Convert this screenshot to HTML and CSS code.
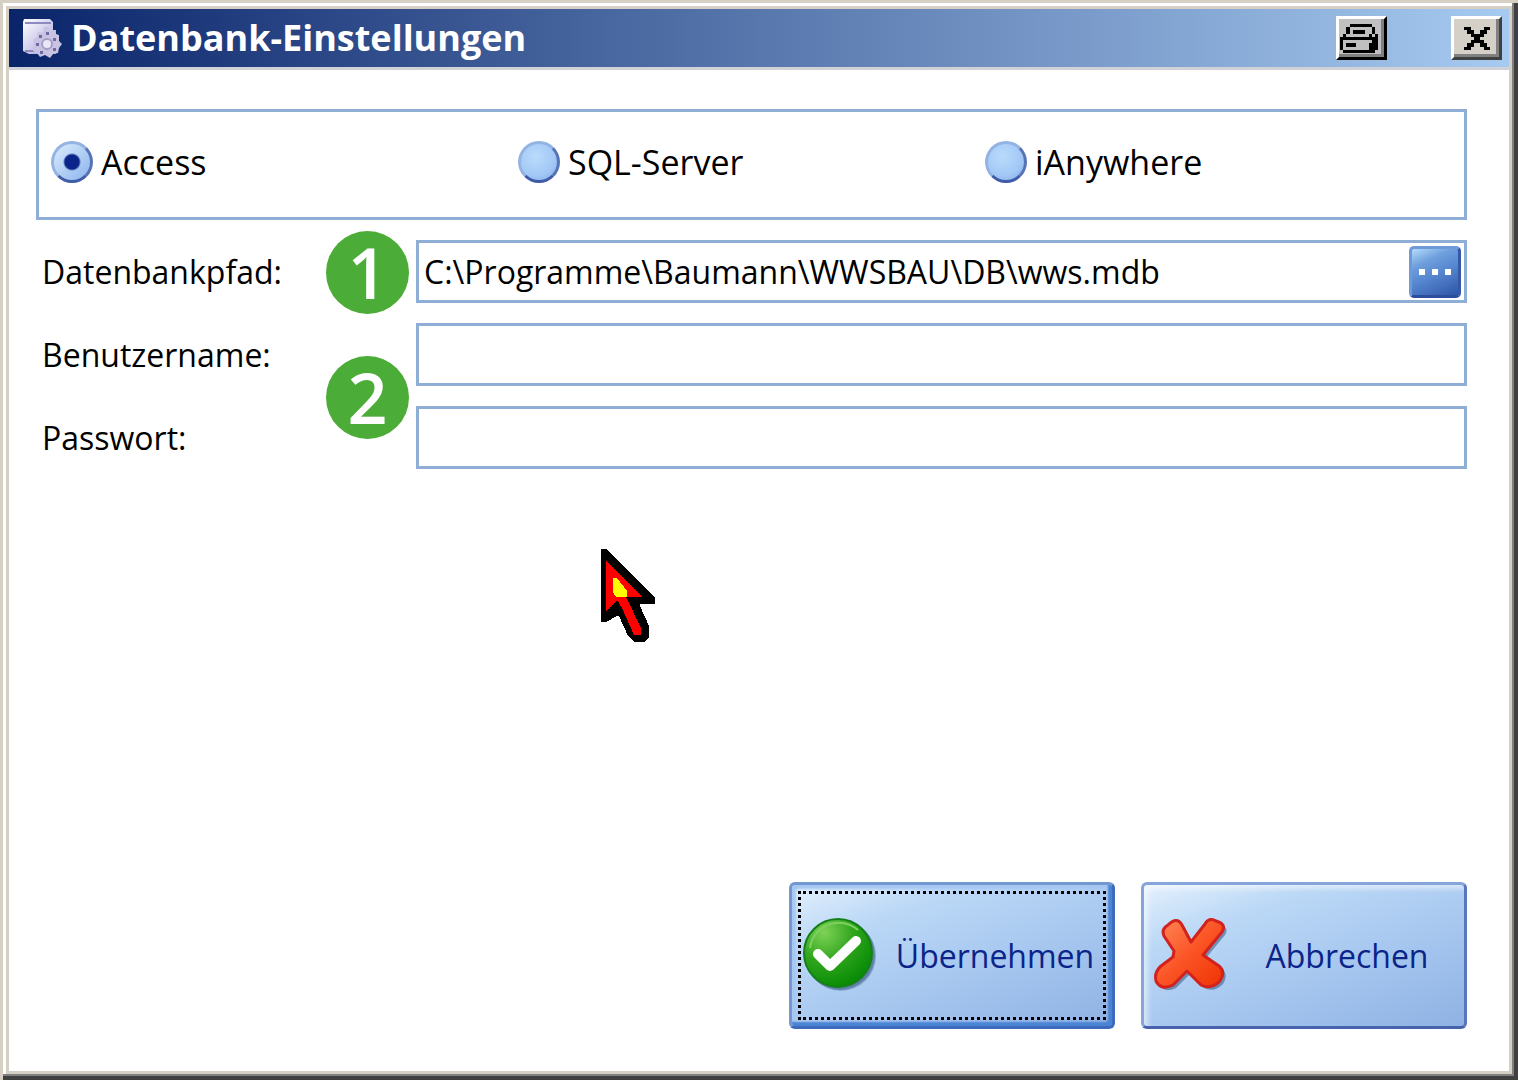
FILE: index.html
```html
<!DOCTYPE html>
<html lang="de">
<head>
    <meta charset="UTF-8">
    <meta name="viewport" content="width=device-width, initial-scale=1.0">
    <title>Datenbank-Einstellungen</title>
    <link rel="stylesheet" href="styles.css">
</head>
<body>
    <div class="window">
        <header class="titlebar">
            <svg class="app-icon" viewBox="0 0 40 41" aria-hidden="true">
                <defs>
                    <linearGradient id="sheet" x1="0" y1="0" x2="1" y2="1">
                        <stop offset="0" stop-color="#ffffff"/>
                        <stop offset="0.5" stop-color="#d2cfee"/>
                        <stop offset="1" stop-color="#9a94c8"/>
                    </linearGradient>
                </defs>
                <path d="M2 1h26l3 3v8h3v24H7l-6-3V4z" fill="url(#sheet)"/>
                <path d="M3 5h26M3 33h10" stroke="#8d8abf" stroke-width="2"/>
                <path d="M22 9h5v4l5-1 2 4 3 1v6l3 3-3 4-1 5-5 1-3 4-5-3-5 2-3-4-4-2 1-6-1-5 4-3 1-5 5 1z" fill="#c9c3e2"/>
                <path d="M17 17h3v3h-3zM24 14h3v3h-3zM31 20h3v3h-3zM14 25h3v3h-3zM18 33h3v3h-3zM31 30h3v3h-3z" fill="#6f6aa6"/>
                <circle cx="25" cy="26" r="5" fill="#e9e6f6" stroke="#a59dc8" stroke-width="2"/>
            </svg>
            <h1 class="title">Datenbank-Einstellungen</h1>
            <button type="button" class="caption-button print-button" aria-label="Drucken">
                <svg width="38" height="29" viewBox="0 0 12 9" preserveAspectRatio="none" shape-rendering="crispEdges">
                    <path d="M3 0h7v1h-7zM2 1h1v2h-1zM10 1h1v2h-1zM4 2h4v1h-4zM1 3h1v1h-1zM9 3h1v1h-1zM11 3h1v5h-1zM0 4h11v1h-11zM0 5h1v3h-1zM10 5h1v4h-1zM9 6h1v2h-1zM2 6h3v1h-3zM1 8h9v1h-9z"/>
                </svg>
            </button>
            <button type="button" class="caption-button close-button" aria-label="Schließen">
                <svg width="26" height="23" viewBox="0 0 8 7" preserveAspectRatio="none" shape-rendering="crispEdges">
                    <path d="M0 0h2v1h1v1h2v-1h1v-1h2v1h-1v1h-1v1h-1v1h1v1h1v1h1v1h-2v-1h-1v-1h-2v1h-1v1h-2v-1h1v-1h1v-1h1v-1h-1v-1h-1v-1h-1z"/>
                </svg>
            </button>
        </header>

        <form class="content">
            <!-- Datenbanktyp -->
            <div class="db-types" role="radiogroup" aria-label="Datenbanktyp">
                <label class="db-type"><input type="radio" name="dbtype" checked>Access</label>
                <label class="db-type"><input type="radio" name="dbtype">SQL-Server</label>
                <label class="db-type"><input type="radio" name="dbtype">iAnywhere</label>
            </div>

            <!-- Verbindungsdaten -->
            <div class="fields">
                <label for="dbpath">Datenbankpfad:</label>
                <div class="field">
                    <input type="text" id="dbpath" value="C:\Programme\Baumann\WWSBAU\DB\wws.mdb">
                    <button type="button" class="browse-button" aria-label="Durchsuchen">
                        <span class="dot"></span><span class="dot"></span><span class="dot"></span>
                    </button>
                </div>
                <label for="username">Benutzername:</label>
                <div class="field"><input type="text" id="username"></div>
                <label for="password">Passwort:</label>
                <div class="field"><input type="password" id="password"></div>
                <span class="badge badge-path">1</span>
                <span class="badge badge-login">2</span>
            </div>

            <div class="actions">
                <button type="submit" class="action default">
                    <svg width="76" height="76" viewBox="0 0 76 76" aria-hidden="true">
                        <defs>
                            <radialGradient id="green" cx="0.3" cy="0.2" r="0.85">
                                <stop offset="0" stop-color="#7fd257"/>
                                <stop offset="0.5" stop-color="#2fa51c"/>
                                <stop offset="1" stop-color="#078a05"/>
                            </radialGradient>
                        </defs>
                        <circle cx="40" cy="38" r="35" fill="#35577f" opacity="0.3"/>
                        <circle cx="39" cy="37" r="35" fill="#35577f" opacity="0.5"/>
                        <circle cx="37" cy="35" r="34" fill="url(#green)" stroke="#14801a" stroke-width="2"/>
                        <path d="M9 30a29 29 0 0 1 48-18" fill="none" stroke="#7ed060" stroke-width="2"/>
                        <path d="M17 36l12 12 26-25" fill="none" stroke="#fff" stroke-width="10" stroke-linecap="round" stroke-linejoin="round"/>
                    </svg>
                    <span class="action-text">Übernehmen</span>
                </button>
                <button type="button" class="action">
                    <svg width="76" height="76" viewBox="0 0 76 76" aria-hidden="true">
                        <defs>
                            <linearGradient id="red" x1="0" y1="0" x2="1" y2="1">
                                <stop offset="0" stop-color="#ff8a5c"/>
                                <stop offset="0.5" stop-color="#fb5425"/>
                                <stop offset="1" stop-color="#ef3204"/>
                            </linearGradient>
                        </defs>
                        <path d="M15 7Q24 -2 29 7L38 24L52 6Q56 -1 63 3Q74 6 69 14L50 37L66 48Q73 54 67 63Q58 72 48 67L34 53L20 67Q8 73 3 63Q1 54 8 48L20 39L21 33L11 18Q8 11 15 7Z" transform="translate(3 3)" fill="#35577f" opacity="0.55"/>
                        <path d="M15 7Q24 -2 29 7L38 24L52 6Q56 -1 63 3Q74 6 69 14L50 37L66 48Q73 54 67 63Q58 72 48 67L34 53L20 67Q8 73 3 63Q1 54 8 48L20 39L21 33L11 18Q8 11 15 7Z" fill="url(#red)" stroke="#d3211d" stroke-width="3" stroke-linejoin="round"/>
                    </svg>
                    <span class="action-text">Abbrechen</span>
                </button>
            </div>
        </form>

        <!-- Mauszeiger -->
        <svg class="pointer" width="54" height="93" viewBox="0 0 54 93" shape-rendering="crispEdges" aria-hidden="true">
            <path d="M0 0h5l49 48v7H39v2l9 20v11l-4 5H33l-6-6-9-20h-2L5 73H0z"/>
            <path d="M5 12l36 36H25l15 31v7h-7L21 59l-5-8L5 62z" fill="#f00"/>
            <path d="M12 29h4l10 13v6H15l-3-5z" fill="#ff0"/>
        </svg>
    </div>
</body>
</html>
```
FILE: styles.css
```css
* {
    box-sizing: border-box;
}
body {
    margin: 0;
    font-family: "Open Sans", "Noto Sans", sans-serif;
    font-size: 32px;
    line-height: 44px;
    color: #000;
    background-color: #404040;
}
.window {
    position: relative;
    display: flex;
    flex-direction: column;
    min-height: 100vh;
    padding: 9px;
    background-color: #fff;
    box-shadow:
        inset 3px 3px 0 #d6d0c4,
        inset -4px -4px 0 #404040,
        inset -6px -6px 0 #808080,
        inset 6px 6px 0 #fff,
        inset 9px 9px 0 #d6d0c4,
        inset -9px -9px 0 #d6d0c4;
}

/* Titelleiste */
.titlebar {
    display: flex;
    align-items: center;
    height: 61px;
    padding: 0 7px 0 13px;
    border-bottom: 3px solid #d0d2d8;
    background: linear-gradient(to right, #0a246a, #a6caf0);
}
.app-icon {
    width: 40px;
    height: 41px;
}
.title {
    flex: 1;
    margin: 0 0 0 9px;
    font-size: 36px;
    font-weight: 700;
    color: #fff;
}
.caption-button {
    display: flex;
    align-items: center;
    justify-content: center;
    width: 51px;
    height: 44px;
    padding: 0;
    border: 3px solid;
    border-color: #fff #404040 #404040 #fff;
    background-color: #d4d0c8;
    box-shadow: inset -3px -3px 0 #808080;
}
.print-button {
    margin-right: 64px;
    padding-right: 5px;
    border-color: #fff #000 #000 #fff;
    background-color: #c0c0c0;
}

.content {
    flex: 1;
    display: flex;
    flex-direction: column;
    gap: 20px;
    margin: 0;
    padding: 39px 42px 42px 27px;
}
.db-types {
    display: grid;
    grid-template-columns: repeat(3, 1fr);
    height: 111px;
    padding: 28px 12px;
    border: 3px solid #8faed6;
    font-size: 34px;
}
.db-type {
    display: flex;
    align-items: center;
    gap: 8px;
    height: 44px;
}
.db-type input {
    appearance: none;
    width: 42px;
    height: 42px;
    margin: 0;
    border: 3px solid;
    border-color: #93b3e2 #5673b8 #3f5ca8 #93b3e2;
    border-radius: 50%;
    background: radial-gradient(circle at 40% 35%, #b9dbfb, #a3c8f6 60%, #7fa6e4);
}
.db-type input:checked {
    background: radial-gradient(circle, #0a2489 7px, rgba(10, 36, 137, 0) 9px), linear-gradient(135deg, #d9ecfd, #8db4ec);
}

/* Eingabefelder */
.fields {
    position: relative;
    display: grid;
    grid-template-columns: 380px 1fr;
    row-gap: 20px;
    align-items: center;
}
.fields label {
    padding-left: 6px;
}
.field {
    display: flex;
    align-items: center;
    height: 63px;
    padding: 0 3px 0 5px;
    border: 3px solid #8faed6;
}
.field input {
    flex: 1;
    min-width: 0;
    padding: 0;
    border: none;
    outline: none;
    background: none;
    font: inherit;
    color: inherit;
}
.browse-button {
    display: flex;
    align-items: center;
    justify-content: center;
    gap: 7px;
    width: 52px;
    height: 52px;
    padding: 0;
    border: 3px solid;
    border-color: #6f9ad8 #3559a8 #2c4c9c #6f9ad8;
    border-radius: 5px;
    background: linear-gradient(155deg, #b4dcfa 0%, #6f9fdd 28%, #5586cf 55%, #2f55a8 100%);
}
.dot {
    width: 6px;
    height: 6px;
    background-color: #fff;
}
.badge {
    position: absolute;
    left: 290px;
    width: 83px;
    height: 83px;
    border-radius: 50%;
    background-color: #4cac38;
    color: #fff;
    font-size: 70px;
    font-weight: 600;
    line-height: 83px;
    text-align: center;
}
.badge-path {
    top: -9px;
}
.badge-login {
    top: 116px;
}

/* Schaltflächen */
.actions {
    display: flex;
    justify-content: flex-end;
    gap: 26px;
    margin-top: auto;
}
.action {
    display: flex;
    align-items: center;
    gap: 6px;
    width: 326px;
    height: 147px;
    padding: 0 5px 0 9px;
    border: 3px solid;
    border-color: #86a5da #5877bb #4763ae #86a5da;
    border-radius: 6px;
    background: linear-gradient(160deg, #e4f1fd 0%, #bbd8f6 25%, #a9c9f0 55%, #8fb2e4 100%);
    box-shadow: inset 4px 4px 5px rgba(255, 255, 255, 0.5);
    font: inherit;
    color: #0a2489;
}
.action.default {
    border-color: #7497d2 #3d6abb #3d6abb #7497d2;
    box-shadow: inset -4px -4px 2px #4a82d4, inset 4px 4px 3px #a5c6f0;
    outline: 3px dotted #000;
    outline-offset: -12px;
}
.action-text {
    flex: 1;
    text-align: center;
}
.pointer {
    position: absolute;
    left: 601px;
    top: 549px;
}
```
